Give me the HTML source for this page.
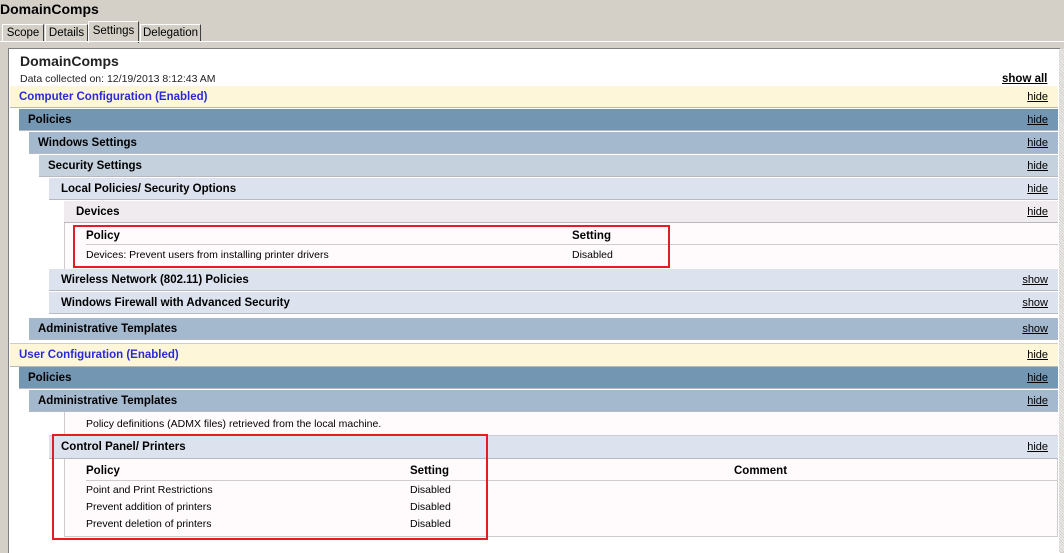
<!DOCTYPE html>
<html><head><style>
body{margin:0;width:1064px;height:552px;background:#d4d0c8;position:relative;overflow:hidden;font-family:"Liberation Sans",Tahoma,sans-serif;font-size:11px;color:#000}
.a{position:absolute}
.r{position:absolute;right:6px;height:22px;line-height:22px;border-bottom:1px solid #b8b8c0;box-sizing:border-box;font-weight:bold;font-size:11.5px;padding-left:9px}
.r .h{position:absolute;right:10px;top:0;font-weight:normal;text-decoration:underline;font-size:11px}
.bl{color:#2a2ad8}
.t{position:absolute;font-size:10.5px}
.b{font-weight:bold;font-size:11.5px}
.tab{position:absolute;top:24px;height:17px;background:#d4d0c8;border:1px solid #fff;border-right:1px solid #404040;border-bottom:none;font-size:11.5px;line-height:17px;text-align:center}
</style></head><body>
<div class="a" style="left:0px;top:1px;font-weight:bold;font-size:14px">DomainComps</div>
<div class="tab" style="left:2px;width:40px">Scope</div>
<div class="tab" style="left:45px;width:41px">Details</div>
<div class="tab" style="left:88px;top:21px;height:21px;width:49px;line-height:19px">Settings</div>
<div class="tab" style="left:140px;width:59px">Delegation</div>
<div class="a" style="left:0;top:41px;width:1064px;height:1px;background:#fff"></div>
<div class="a" style="left:8px;top:48px;width:1051px;height:504px;background:#fff;border-top:1px solid #808080;border-left:1px solid #808080"></div>
<div class="a" style="left:1059px;top:49px;width:5px;height:503px;background:repeating-linear-gradient(45deg,#eee 0 1px,#d4d0c8 1px 2px)"></div>
<div class="a" style="left:20px;top:53px;font-weight:bold;font-size:14px;color:#222">DomainComps</div>
<div class="a" style="left:20px;top:73px;font-size:10.5px;color:#222">Data collected on: 12/19/2013 8:12:43 AM</div>
<div class="a" style="left:1002px;top:73px;font-weight:bold;text-decoration:underline;font-size:11.5px">show all</div>

<div class="r bl" style="left:10px;top:86px;background:#fef6d8;padding-left:9px">Computer Configuration (Enabled)<span class="h" style="color:#000">hide</span></div>
<div class="r" style="left:19px;top:109px;background:#7396b3">Policies<span class="h">hide</span></div>
<div class="r" style="left:29px;top:132px;background:#a4b9ce">Windows Settings<span class="h">hide</span></div>
<div class="r" style="left:39px;top:155px;background:#c5d1dd">Security Settings<span class="h">hide</span></div>
<div class="r" style="left:49px;top:178px;background:#dde3ee;padding-left:12px">Local Policies/ Security Options<span class="h">hide</span></div>
<div class="r" style="left:64px;top:201px;background:#efebee;padding-left:12px">Devices<span class="h">hide</span></div>
<div class="a" style="left:64px;top:223px;width:994px;height:46px;background:#fffbfd;border-left:1px solid #ccc"></div>
<div class="a" style="left:86px;top:244px;width:972px;height:1px;background:#ccc"></div>
<div class="t b" style="left:86px;top:230px">Policy</div>
<div class="t b" style="left:572px;top:230px">Setting</div>
<div class="t" style="left:86px;top:249px">Devices: Prevent users from installing printer drivers</div>
<div class="t" style="left:572px;top:249px">Disabled</div>
<div class="a" style="left:73px;top:225px;width:593px;height:39px;border:2px solid #e41c24"></div>
<div class="r" style="left:49px;top:269px;background:#dde3ee;padding-left:12px">Wireless Network (802.11) Policies<span class="h">show</span></div>
<div class="r" style="left:49px;top:292px;background:#dde3ee;padding-left:12px">Windows Firewall with Advanced Security<span class="h">show</span></div>
<div class="r" style="left:29px;top:318px;background:#a4b9ce">Administrative Templates<span class="h">show</span></div>
<div class="r bl" style="left:10px;top:343px;height:24px;line-height:22px;background:#fef6d8;border-top:1px solid #ccc">User Configuration (Enabled)<span class="h" style="color:#000">hide</span></div>
<div class="r" style="left:19px;top:367px;background:#7396b3">Policies<span class="h">hide</span></div>
<div class="r" style="left:29px;top:390px;background:#a4b9ce">Administrative Templates<span class="h">hide</span></div>
<div class="a" style="left:64px;top:412px;width:994px;height:23px;background:#fffbfd;border-left:1px solid #ccc"></div>
<div class="t" style="left:86px;top:418px">Policy definitions (ADMX files) retrieved from the local machine.</div>
<div class="r" style="left:49px;top:435px;height:24px;background:#dde3ee;padding-left:12px;border-top:1px solid #ccc">Control Panel/ Printers<span class="h">hide</span></div>
<div class="a" style="left:64px;top:459px;width:994px;height:78px;background:#fffbfd;border-left:1px solid #ccc;border-bottom:1px solid #ccc;border-right:1px solid #ccc;box-sizing:border-box"></div>
<div class="a" style="left:86px;top:480px;width:972px;height:1px;background:#ccc"></div>
<div class="t b" style="left:86px;top:465px">Policy</div>
<div class="t b" style="left:410px;top:465px">Setting</div>
<div class="t b" style="left:734px;top:465px">Comment</div>
<div class="t" style="left:86px;top:484px">Point and Print Restrictions</div>
<div class="t" style="left:410px;top:484px">Disabled</div>
<div class="t" style="left:86px;top:501px">Prevent addition of printers</div>
<div class="t" style="left:410px;top:501px">Disabled</div>
<div class="t" style="left:86px;top:518px">Prevent deletion of printers</div>
<div class="t" style="left:410px;top:518px">Disabled</div>
<div class="a" style="left:52px;top:434px;width:432px;height:102px;border:2px solid #e41c24"></div>
</body></html>
